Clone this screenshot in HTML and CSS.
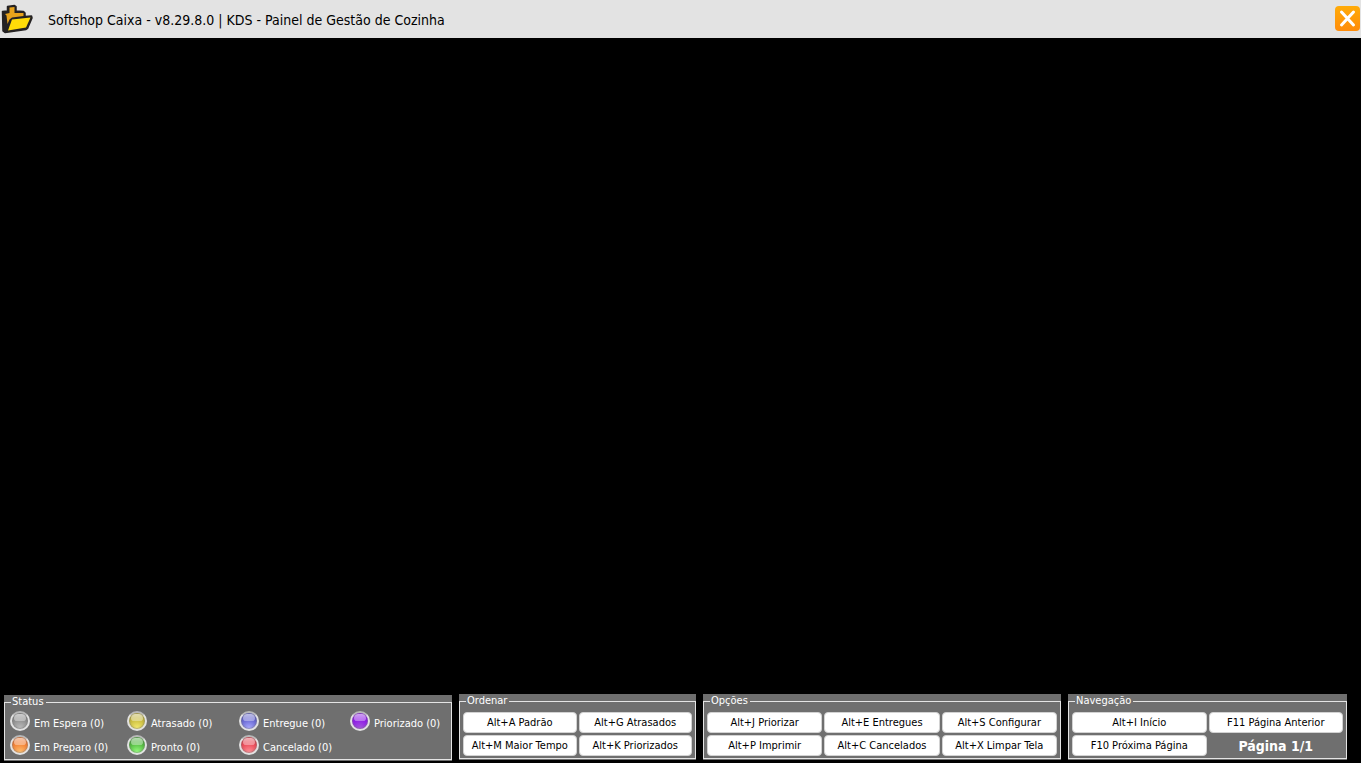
FILE: index.html
```html
<!DOCTYPE html>
<html lang="pt-BR">
<head>
<meta charset="utf-8">
<title>KDS - Painel de Gestão de Cozinha</title>
<link rel="stylesheet" href="styles.css">
</head>
<body>
<header class="titlebar">
  <svg class="app-icon" viewBox="0 0 34 30" aria-hidden="true">
    <path d="M2.500 7.500 7.500 7V2.500L14.500 1.500 16 2.500V7L23.500 7.500 25 9V12.500L31.500 12 32 14 27.500 24.500 26 25.500 5 28.500 3 27Z" fill="#252223" stroke="#252223" stroke-width="1.500" stroke-linejoin="round"/>
    <path d="M9.500 3.500 14.500 3V9L23.500 9V12L12 13.500 9.500 15.500 7.500 20 6.500 11.500 5 10 9.500 9Z" fill="#e8a31c"/>
    <path d="M12 15.500 30.500 13.500 26 23.500 8 26.500Z" fill="#ffdc08"/>
  </svg>
  <h1 class="title">Softshop Caixa - v8.29.8.0 | KDS - Painel de Gestão de Cozinha</h1>
  <button class="close" type="button" aria-label="Fechar">
    <svg viewBox="0 0 25 25" aria-hidden="true"><path d="M6.500 6 18.500 19M18.500 6 6.500 19" fill="none" stroke="#fff" stroke-width="3" stroke-linecap="round"/></svg>
  </button>
</header>
<main class="board"></main>
<footer class="footer">
  <div class="panel panel-status">
    <fieldset class="group">
      <legend class="legend">Status</legend>
      <div class="statuses">
        <span class="status"><i class="led gray"></i>Em Espera (0)</span>
        <span class="status"><i class="led yellow"></i>Atrasado (0)</span>
        <span class="status"><i class="led blue"></i>Entregue (0)</span>
        <span class="status"><i class="led purple"></i>Priorizado (0)</span>
        <span class="status"><i class="led orange"></i>Em Preparo (0)</span>
        <span class="status"><i class="led green"></i>Pronto (0)</span>
        <span class="status"><i class="led red"></i>Cancelado (0)</span>
      </div>
    </fieldset>
  </div>
  <div class="panel">
    <fieldset class="group">
      <legend class="legend">Ordenar</legend>
      <div class="buttons two">
        <button class="btn" type="button">Alt+A Padrão</button>
        <button class="btn" type="button">Alt+G Atrasados</button>
        <button class="btn" type="button">Alt+M Maior Tempo</button>
        <button class="btn" type="button">Alt+K Priorizados</button>
      </div>
    </fieldset>
  </div>
  <div class="panel">
    <fieldset class="group">
      <legend class="legend">Opções</legend>
      <div class="buttons three">
        <button class="btn" type="button">Alt+J Priorizar</button>
        <button class="btn" type="button">Alt+E Entregues</button>
        <button class="btn" type="button">Alt+S Configurar</button>
        <button class="btn" type="button">Alt+P Imprimir</button>
        <button class="btn" type="button">Alt+C Cancelados</button>
        <button class="btn" type="button">Alt+X Limpar Tela</button>
      </div>
    </fieldset>
  </div>
  <div class="panel">
    <fieldset class="group">
      <legend class="legend">Navegação</legend>
      <div class="buttons two">
        <button class="btn" type="button">Alt+I Início</button>
        <button class="btn" type="button">F11 Página Anterior</button>
        <button class="btn" type="button">F10 Próxima Página</button>
        <span class="page">Página 1/1</span>
      </div>
    </fieldset>
  </div>
</footer>
</body>
</html>
```

FILE: styles.css
```css
* { box-sizing: border-box; }
body {
  margin: 0;
  min-height: 100vh;
  display: flex;
  flex-direction: column;
  background: #000;
  font: 11px/14px "DejaVu Sans Condensed", "Noto Sans", sans-serif;
}
.titlebar {
  display: flex;
  align-items: center;
  height: 38px;
  padding: 0 1px 1px 0;
  background: #e3e3e3;
}
.app-icon { width: 34px; height: 30px; }
.title {
  flex: 1;
  margin: 0 0 0 14px;
  padding-top: 2px;
  font-size: 14px;
  line-height: 20px;
  font-weight: 400;
  color: #000;
}
.close {
  width: 25px;
  height: 25px;
  padding: 0;
  border: 0;
  border-radius: 4px;
  background: linear-gradient(#ffab08, #ff8c0a);
}
.close svg { display: block; width: 25px; height: 25px; }
.board { flex: 1; }
.footer {
  display: grid;
  grid-template-columns: 448fr 237fr 358fr 279fr;
  align-items: start;
  gap: 7px;
  padding: 0 14px 2px 4px;
}
.panel {
  min-width: 0;
  padding-bottom: 1px;
  background: #6f6f6f;
  color: #fff;
}
.panel-status { margin-top: 1px; }
.group {
  min-width: 0;
  margin: 0;
  padding: 0;
  border: 1px solid #e4e4e4;
}
.legend { margin-left: 6px; padding: 0 2px 0 1px; }
.statuses {
  display: grid;
  grid-template-columns: 117fr 112fr 111fr 101fr;
  gap: 4px 0;
  padding: 2px 0 4px 5px;
}
.status {
  display: flex;
  align-items: flex-end;
  gap: 4px;
  white-space: nowrap;
}
.led {
  flex: none;
  display: flex;
  justify-content: center;
  width: 20px;
  height: 20px;
  padding-top: 1px;
  border: 2px solid #e2e2e2;
  border-top-color: #b8b8b8;
  border-radius: 50%;
  background: radial-gradient(circle at 50% 95%, var(--glow), var(--base) 65%);
  box-shadow: inset 0 0 1px 1px rgba(120, 120, 120, 0.5);
}
.led::before {
  content: "";
  width: 12px;
  height: 7px;
  border-radius: 6px 6px 4px 4px;
  background: linear-gradient(rgba(255, 255, 255, 0.6), rgba(255, 255, 255, 0.35));
}
.gray { --base: #858585; --glow: #bcbcbc; }
.yellow { --base: #bfb135; --glow: #f6ec70; }
.blue { --base: #5a5ac8; --glow: #aaaaff; }
.purple { --base: #8a10e8; --glow: #a458dc; }
.orange { --base: #f07428; --glow: #ffc070; }
.green { --base: #46ac34; --glow: #98ff80; }
.red { --base: #e63c4a; --glow: #ff9098; }
.buttons {
  display: grid;
  gap: 2px;
  padding: 4px 3px 2px;
}
.two { grid-template-columns: repeat(2, 1fr); }
.three { grid-template-columns: repeat(3, 1fr); }
.btn {
  min-width: 0;
  height: 21px;
  padding: 0;
  border: 1px solid #d2d2d2;
  border-radius: 4px;
  background: #fff;
  color: #000;
  font: inherit;
  white-space: nowrap;
}
.page {
  align-self: center;
  text-align: center;
  font-size: 14px;
  line-height: 16px;
  font-weight: 700;
}
```
